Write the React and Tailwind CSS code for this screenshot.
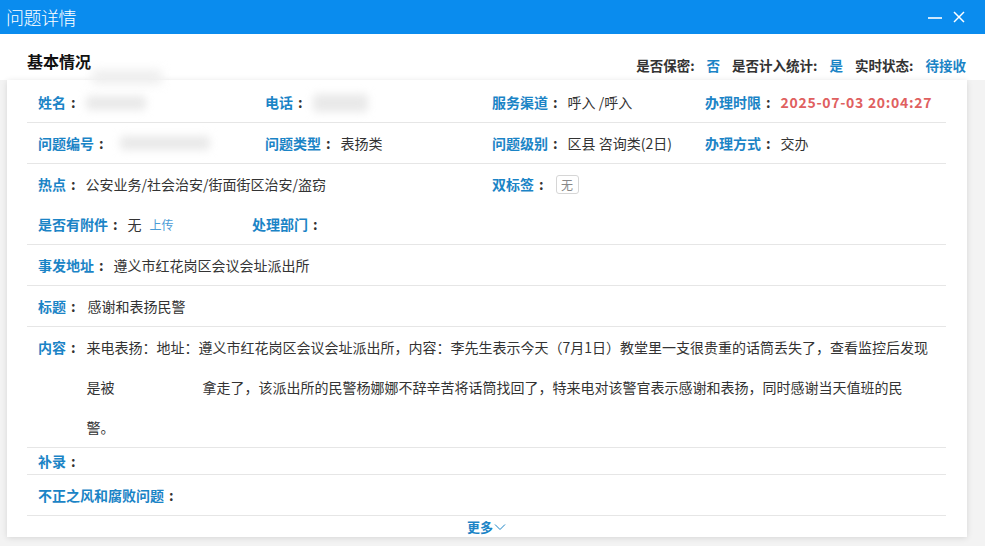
import React from 'react';

const font = { fontFamily: '"Noto Sans CJK SC", "Noto Sans", sans-serif' };

const Label = ({ children }) => (
  <span className="text-[#1b84c6] font-bold">{children}</span>
);

const Colon = () => <span className="text-[#333] font-bold mx-[5px]">:</span>;

const Blur = ({ w, h = 14, className = '' }) => (
  <span
    className={`inline-block rounded bg-[#e9e9e9] blur-[4px] align-middle ${className}`}
    style={{ width: w, height: h }}
  />
);

const Field = ({ label, width, children }) => (
  <div className="flex items-center shrink-0" style={width ? { width } : undefined}>
    <Label>{label}</Label>
    <Colon />
    <span className="ml-[5px] text-[#333] flex items-center">{children}</span>
  </div>
);

const Row = ({ children, border = true, h = 'h-[41px]' }) => (
  <div className={`flex items-center pl-[11px] ${h} ${border ? 'border-b border-[#e6e6e6]' : ''}`}>
    {children}
  </div>
);

export default function App() {
  return (
    <div className="w-[985px] h-[546px] bg-[#f3f3f3] overflow-hidden text-[14px]" style={font}>
      {/* Title bar */}
      <div className="h-[34px] bg-[#0a8cee] flex items-center justify-between pl-[6px] pr-[20px]">
        <span className="text-white text-[18px] font-light tracking-[-0.5px]">问题详情</span>
        <div className="flex items-center gap-[11px]">
          <svg width="14" height="14" viewBox="0 0 14 14">
            <line x1="0" y1="8" x2="14" y2="8" stroke="white" strokeWidth="1.6" />
          </svg>
          <svg width="12" height="12" viewBox="0 0 12 12">
            <line x1="1" y1="1" x2="11" y2="11" stroke="white" strokeWidth="1.5" />
            <line x1="11" y1="1" x2="1" y2="11" stroke="white" strokeWidth="1.5" />
          </svg>
        </div>
      </div>

      {/* Header */}
      <div className="h-[46px] bg-white flex items-center justify-between pl-[27px] pr-[19px] pt-[8px]">
        <span className="text-[16px] font-bold text-[#111]">基本情况</span>
        <div className="flex items-center text-[13.5px] font-semibold text-[#333] gap-[12px] pt-[8px]">
          <span>是否保密: <span className="text-[#1b84c6] ml-[9px]">否</span></span>
          <span>是否计入统计: <span className="text-[#1b84c6] ml-[9px]">是</span></span>
          <span>实时状态: <span className="text-[#1b84c6] ml-[9px]">待接收</span></span>
        </div>
      </div>

      {/* Card */}
      <div className="relative ml-[7px] w-[960px] bg-white shadow-[0_1px_6px_rgba(0,0,0,0.12)] pl-[20px] pr-[21px] pt-[3px]">
        <span className="absolute left-[85px] top-[-10px] w-[70px] h-[14px] rounded bg-[#eeeeee] blur-[5px]" />
        <Row h="h-[40px]">
          <Field label="姓名" width={227}><Blur w={60} /></Field>
          <Field label="电话" width={227}><Blur w={55} h={18} /></Field>
          <Field label="服务渠道" width={213}>呼入 /呼入</Field>
          <Field label="办理时限">
            <span className="text-[#e06060] font-bold tracking-[0.7px]">2025-07-03 20:04:27</span>
          </Field>
        </Row>
        <Row>
          <Field label="问题编号" width={227}><Blur w={90} className="ml-[6px]" /></Field>
          <Field label="问题类型" width={227}>表扬类</Field>
          <Field label="问题级别" width={213}>区县 咨询类(2日)</Field>
          <Field label="办理方式">交办</Field>
        </Row>
        <Row border={false}>
          <Field label="热点" width={454}>公安业务/社会治安/街面街区治安/盗窃</Field>
          <Field label="双标签">
            <span className="ml-[2px] inline-flex items-center justify-center w-[23px] h-[19px] border border-[#d6d6d6] rounded-[3px] text-[12px] text-[#888]">无</span>
          </Field>
        </Row>
        <Row h="h-[40px]">
          <Field label="是否有附件" width={214}>
            无<span className="ml-[8px] text-[12px] text-[#4a9bd6]">上传</span>
          </Field>
          <Field label="处理部门" />
        </Row>
        <Row>
          <Field label="事发地址">遵义市红花岗区会议会址派出所</Field>
        </Row>
        <Row>
          <Field label="标题"><span className="ml-[2px]">感谢和表扬民警</span></Field>
        </Row>
        <div className="flex pl-[11px] border-b border-[#e6e6e6] h-[121px] leading-[40px]">
          <div className="flex shrink-0">
            <Label>内容</Label>
            <Colon />
          </div>
          <div className="ml-[6px] text-[#333]">
            <div>来电表扬：地址：遵义市红花岗区会议会址派出所，内容：李先生表示今天（7月1日）教堂里一支很贵重的话筒丢失了，查看监控后发现</div>
            <div className="flex items-center">
              是被<span className="inline-block w-[88px]" />拿走了，该派出所的民警杨娜娜不辞辛苦将话筒找回了，特来电对该警官表示感谢和表扬，同时感谢当天值班的民
            </div>
            <div>警。</div>
          </div>
        </div>
        <Row h="h-[27px]">
          <Label>补录</Label>
          <Colon />
        </Row>
        <Row>
          <Label>不正之风和腐败问题</Label>
          <Colon />
        </Row>
        <div className="h-[21px] flex items-center justify-center">
          <span className="text-[#1b84c6] font-semibold text-[13px] flex items-center">
            更多
            <svg width="12" height="8" viewBox="0 0 12 8" className="ml-[1px]">
              <polyline points="1,1.5 6,6.5 11,1.5" fill="none" stroke="#1b84c6" strokeWidth="1" />
            </svg>
          </span>
        </div>
      </div>
    </div>
  );
}
